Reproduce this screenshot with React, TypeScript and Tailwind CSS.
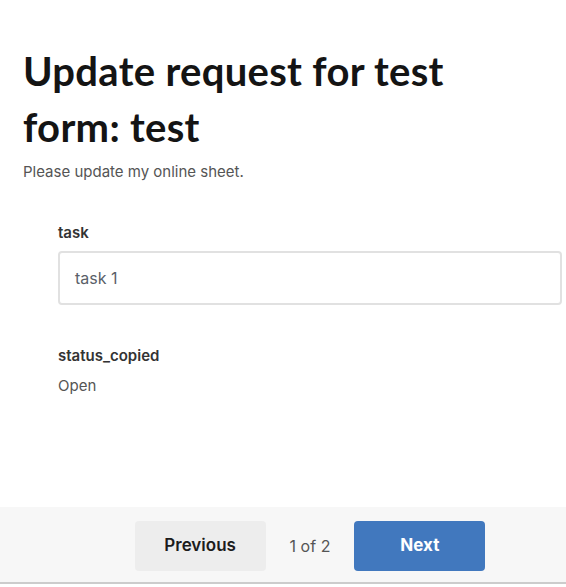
import React from "react";

export default function App() {
  return (
    <div className="min-h-[587px] bg-white flex flex-col">
      <div className="px-[23px] pt-[43px]">
        <h1 className="text-[40px] leading-[56px] font-bold text-[#141414] tracking-[0.3px]" style={{ fontFamily: "Lato, 'Noto Sans', sans-serif" }}>
          Update request for test form: test
        </h1>
        <p className="mt-[6px] text-[15px] leading-[22px] text-[#555]" style={{ fontFamily: "Inter, 'Noto Sans', sans-serif" }}>
          Please update my online sheet.
        </p>
      </div>
      <div className="pl-[58px] pr-[4px] pt-[39px]" style={{ fontFamily: "Inter, 'Noto Sans', sans-serif" }}>
        <div className="text-[15px] leading-[22px] font-semibold text-[#333]">task</div>
        <div className="mt-[7px] h-[54px] rounded-[4px] border-2 border-[#e1e1e1] flex items-center px-[15px] text-[16px] text-[#5a5f69]">
          task 1
        </div>
        <div className="mt-[40px] text-[15px] leading-[22px] font-semibold text-[#333]">status_copied</div>
        <div className="mt-[8px] text-[15px] leading-[22px] text-[#555]">Open</div>
      </div>
      <div className="mt-[110px] h-[77px] bg-[#f7f7f7] border-b-2 border-[#cccccc] flex items-center justify-center gap-[24px] pl-[54px] pt-[2px]" style={{ fontFamily: "Inter, 'Noto Sans', sans-serif" }}>
        <button className="w-[131px] h-[50px] rounded-[4px] bg-[#ededed] text-[17px] font-semibold text-[#1c1c1c]">Previous</button>
        <span className="text-[16px] text-[#555]">1 of 2</span>
        <button className="w-[131px] h-[50px] rounded-[4px] bg-[#4178be] text-[17px] font-bold text-white">Next</button>
      </div>
    </div>
  );
}
